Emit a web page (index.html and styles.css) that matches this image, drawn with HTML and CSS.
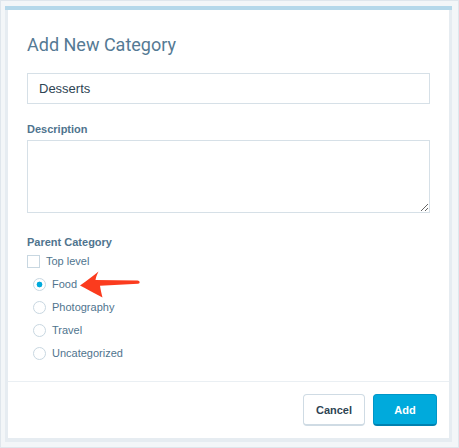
FILE: index.html
```html
<!DOCTYPE html>
<html lang="en">
<head>
<meta charset="utf-8">
<title>Add New Category</title>
<link rel="stylesheet" href="styles.css">
</head>
<body>
<div class="page">
  <div class="dialog-frame">
    <div class="dialog">
      <div class="dialog-content">
        <h1 class="dialog-title">Add New Category</h1>
        <input class="text-input" type="text" value="Desserts">
        <label class="field-label">Description</label>
        <textarea class="textarea"></textarea>
        <div class="field-label parent-label">Parent Category</div>
        <div class="check-row"><span class="checkbox"></span><span>Top level</span></div>
        <ul class="radio-list">
          <li class="radio-row"><span class="radio checked"></span><span>Food</span></li>
          <li class="radio-row"><span class="radio"></span><span>Photography</span></li>
          <li class="radio-row"><span class="radio"></span><span>Travel</span></li>
          <li class="radio-row"><span class="radio"></span><span>Uncategorized</span></li>
        </ul>
      </div>
      <div class="dialog-footer">
        <button class="btn">Cancel</button>
        <button class="btn btn-primary">Add</button>
      </div>
    </div>
  </div>
  <svg class="annotation" viewBox="0 0 459 448" width="459" height="448" aria-hidden="true">
    <path d="M80,285.5 C88,280 94,275 98.5,271.5 C97,274.5 96,277 95.5,280 L137.5,280.5 C140,280.7 140.5,283.5 138,283.8 L100,285.8 C100.5,289.5 101.5,293.5 102.5,297.5 C94,293 87,289 80,285.5 Z" fill="#fb3b1e"/>
  </svg>
</div>
</body>
</html>
```
FILE: styles.css
```css
html, body {
  margin: 0;
  padding: 0;
}

body {
  width: 459px;
  height: 448px;
  overflow: hidden;
  background: #f3f6f8;
  font-family: "Liberation Sans", Arial, sans-serif;
}

.page {
  position: relative;
  box-sizing: border-box;
  width: 459px;
  height: 448px;
  border: 1px solid #dfe6ec;
  padding: 5px 0 0 4px;
}

.dialog-frame {
  box-sizing: border-box;
  width: 447px;
  height: 436px;
  background: #e6ecf1;
  border-top: 4px solid #b5d8ea;
  padding: 0 3px 4px;
}

.dialog {
  height: 100%;
  background: #fff;
  display: flex;
  flex-direction: column;
}

.dialog-content {
  flex: 1;
  padding: 23px 19px 0;
}

.dialog-title {
  margin: 0;
  font-family: Roboto, "Liberation Sans", sans-serif;
  font-weight: 400;
  font-size: 18px;
  line-height: 24px;
  color: #557a94;
}

.text-input {
  display: block;
  box-sizing: border-box;
  width: 403px;
  height: 31px;
  margin: 16px 0 0;
  padding: 0 11px;
  border: 1px solid #d6e0e7;
  font-family: "Liberation Sans", Arial, sans-serif;
  font-size: 13px;
  color: #2e4453;
  background: #fff;
  outline: none;
}

.field-label {
  display: block;
  margin: 18px 0 4px;
  font-weight: bold;
  font-size: 11px;
  line-height: 14px;
  color: #4f748e;
}

.textarea {
  display: block;
  box-sizing: border-box;
  width: 403px;
  height: 73px;
  margin: 0;
  border: 1px solid #d6e0e7;
  background: #fff;
  outline: none;
}

.parent-label {
  margin: 22px 0 6px;
}

.check-row,
.radio-row {
  display: flex;
  align-items: center;
  gap: 6px;
  height: 13px;
  font-size: 11px;
  line-height: 13px;
  color: #4f748e;
}

.checkbox {
  box-sizing: border-box;
  width: 13px;
  height: 13px;
  border: 1px solid #c8d7e1;
  background: #fff;
}

.radio-list {
  list-style: none;
  margin: 10px 0 0;
  padding: 0 0 0 6px;
  display: flex;
  flex-direction: column;
  gap: 10px;
}

.radio {
  box-sizing: border-box;
  width: 13px;
  height: 13px;
  border: 1px solid #c8d7e1;
  border-radius: 50%;
  background: #fff;
}

.radio.checked {
  background: radial-gradient(circle, #00aadc 0 2.6px, #fff 3.2px);
}

.dialog-footer {
  display: flex;
  justify-content: flex-end;
  gap: 8px;
  padding: 12px;
  border-top: 1px solid #eaeff3;
}

.btn {
  box-sizing: border-box;
  width: 62px;
  height: 32px;
  padding: 0;
  border: 1px solid #cfdbe4;
  border-bottom-width: 2px;
  border-radius: 4px;
  background: #fff;
  font-family: "Liberation Sans", Arial, sans-serif;
  font-weight: bold;
  font-size: 11px;
  color: #2e4453;
}

.btn-primary {
  width: 64px;
  background: #00aadc;
  border-color: #0096c8;
  border-bottom-color: #0081b0;
  color: #fff;
}

.annotation {
  position: absolute;
  left: -1px;
  top: -1px;
  pointer-events: none;
}
```
